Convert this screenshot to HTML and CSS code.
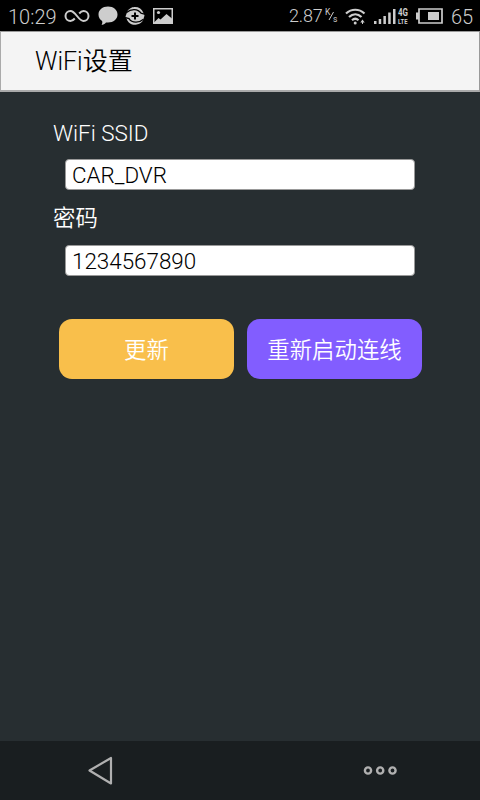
FILE: index.html
```html
<!DOCTYPE html>
<html lang="zh-CN">
<head>
<meta charset="utf-8">
<title>WiFi设置</title>
<link rel="stylesheet" href="styles.css">
</head>
<body>
<div class="status">
  <span class="time">10:29</span>
  <svg class="infinity" width="26" height="14" viewBox="0 0 26 14" fill="none" stroke="#cdcdcd" stroke-width="2"><path d="M15.200 4.500C16.500 3 17.800 2 19.500 2a5 5 0 0 1 0 10C14.500 12 11.500 2 6.500 2a5 5 0 0 0 0 10c1.700 0 3-1 4.300-2.500"/></svg>
  <svg class="chat" width="20" height="20" viewBox="0 0 20 20" fill="#cdcdcd"><path d="M10 .5c5.500 0 9.500 3.500 9.500 8s-4 8-9.500 8l-2-.1c-1 1.500-3 2.400-4.500 2.400.8-1 1.100-2.400.6-3.800C1.800 13.500.5 11.200.5 8.500c0-4.500 4-8 9.500-8Z"/></svg>
  <svg class="sync" width="20" height="20" viewBox="0 0 20 20"><path fill="#cdcdcd" d="M2.500 5C5 1.500 8 1 10 1c4 0 7 2 8.200 5.500L19.500 9.500 18 14.500C15.500 18 12 18.800 10 18.800c-4 0-7-2-8.200-5.500L.5 10.500Z"/><path fill="none" stroke="#000" stroke-width="1.300" d="M1.500 6.500C6 2.500 13 2.500 16 7.200l3.500 1M18.500 13.300C14 17.300 7 17.300 4 12.600l-3.500-1"/><path fill="none" stroke="#000" stroke-width="2" d="M6.500 9.900h7M10 6.400v7"/></svg>
  <svg class="photo" width="20" height="16" viewBox="0 0 20 16"><path fill="none" stroke="#cdcdcd" stroke-width="1.500" d="M.75.75h18.500v14.500H.75z"/><path fill="#cdcdcd" d="M1 14.500 5.500 10l2 1.500L13.500 6l6 5v4H1z"/><circle cx="5.500" cy="4.500" r="1.600" fill="#cdcdcd"/></svg>
  <span class="rate">2.87</span>
  <svg class="unit" width="13" height="14" viewBox="0 0 13 14"><text x="0" y="7">K</text><text x="8" y="13.500">s</text><path d="M4 12 8.500 4" stroke="#cdcdcd"/></svg>
  <svg class="wifi" width="21" height="17" viewBox="0 0 21 17" fill="none" stroke="#cdcdcd" stroke-width="2.200"><path d="M1 5.500c5.500-5 13-5 18.500 0M4 9c3.800-3.500 8.800-3.500 12.500 0M7 12.200c2-1.800 4.500-1.800 6.500 0"/><circle cx="10.200" cy="15" r="1.500" fill="#cdcdcd" stroke="none"/><path d="M15.300 14.500 17.500 11.500l2.200 3Z" fill="#cdcdcd" stroke="none"/><path d="M17.500 13v3" stroke-width="1"/></svg>
  <svg class="signal" width="22" height="16" viewBox="0 0 22 16" fill="#cdcdcd"><path d="M0 13h2.500v3H0zM4.700 11h2.500v5H4.700zM9.400 8h2.500v8H9.400zM14.200 4.500h2.500V16h-2.500zM19 1h2.500v15H19z"/></svg>
  <svg class="lte" width="11" height="20" viewBox="0 -2 11 20"><text class="g4" x="0" y="8.200" textLength="10" lengthAdjust="spacingAndGlyphs">4G</text><text class="small" x="0" y="16" textLength="9.500" lengthAdjust="spacingAndGlyphs">LTE</text></svg>
  <svg class="battery" width="27" height="16" viewBox="0 0 27 16"><path fill="none" stroke="#cdcdcd" stroke-width="1.700" d="M3 1h23v14H3z"/><path fill="#cdcdcd" d="M0 4.500h3v7H0zM12 4h11v8H12z"/></svg>
  <span class="level">65</span>
</div>
<header class="titlebar"><h1>WiFi设置</h1></header>
<main class="content">
  <label class="label" for="ssid">WiFi SSID</label>
  <input class="field" id="ssid" type="text" value="CAR_DVR">
  <label class="label second" for="password">密码</label>
  <input class="field" id="password" type="text" value="1234567890">
  <div class="actions">
    <button class="update" type="button">更新</button>
    <button class="restart" type="button">重新启动连线</button>
  </div>
</main>
<nav class="navbar">
  <svg width="26" height="30" viewBox="0 0 26 30" fill="none" stroke="#b0b0b0" stroke-width="2.200" stroke-linejoin="round"><path d="M2.500 14.500 24 2v25.500Z"/></svg>
  <svg width="34" height="10" viewBox="0 0 34 10" fill="none" stroke="#b0b0b0" stroke-width="2.400"><circle cx="5" cy="4.500" r="3.100"/><circle cx="17.200" cy="4.500" r="3.100"/><circle cx="29.500" cy="4.500" r="3.100"/></svg>
</nav>
</body>
</html>
```
FILE: styles.css
```css
* { box-sizing: border-box; }

body {
  margin: 0;
  height: 800px;
  display: flex;
  flex-direction: column;
  overflow: hidden;
  background: #272e31;
  font-family: Roboto, "Noto Sans CJK SC", sans-serif;
  font-weight: 350;
}

.status {
  flex: none;
  height: 31px;
  display: flex;
  align-items: center;
  padding: 1px 0 0 8px;
  background: #000;
  color: #cdcdcd;
  font-size: 20px;
  font-weight: 300;
  line-height: 30px;
  white-space: nowrap;
}
.status svg { flex: none; }
.time { width: 48px; padding-top: 1px; }
.infinity { margin-left: 8px; }
.chat { margin-left: 8px; }
.sync { margin-left: 7px; }
.photo { margin-left: 8px; }
.rate { margin-left: auto; font-size: 18px; letter-spacing: -0.2px; width: 35px; }
.unit { margin-left: 1px; margin-top: -3px; font-size: 8.5px; fill: #cdcdcd; font-weight: 400; }
.wifi { margin-left: 7px; }
.signal { margin-left: 8px; }
.lte { margin-left: 2px; fill: #cdcdcd; font-weight: 700; overflow: visible; }
.g4 { font-size: 10px; }
.small { font-size: 6.5px; }
.battery { margin-left: 7px; }
.level { width: 29px; margin-left: 8px; padding-top: 1px; }

.titlebar {
  flex: none;
  height: 61px;
  padding: 2px 0 0 34px;
  display: flex;
  align-items: center;
  background: #f4f4f4;
  border: 1px solid #999;
  border-left-color: #aaa;
  border-bottom: 2px solid #aaa;
}
.titlebar h1 {
  margin: 0;
  font-size: 25px;
  font-weight: 350;
  line-height: 36px;
  color: #000;
}

.content {
  flex: 1;
  padding: 25px 53px 0;
}
.label {
  display: block;
  height: 32px;
  line-height: 32px;
  font-size: 22.4px;
  color: #fff;
}
.label.second { margin-top: 12px; }
.field {
  display: block;
  width: 350px;
  height: 31px;
  margin: 10px 0 0 12px;
  padding: 1px 5px 0 6px;
  border: 1px solid #999;
  border-radius: 4px;
  background: #fff;
  color: #000;
  font: 350 22.4px/28px Roboto, "Noto Sans CJK SC", sans-serif;
}
.label.second + .field { margin-top: 11px; }

.actions {
  display: flex;
  gap: 13px;
  margin: 43px 0 0 6px;
}
.actions button {
  flex: none;
  width: 175px;
  height: 60px;
  padding: 2px 0 0;
  border: 0;
  border-radius: 13px;
  color: #fff;
  font: 350 22.4px/58px Roboto, "Noto Sans CJK SC", sans-serif;
}
.update { background: #f9bf4b; }
.restart { background: #825dff; }

.navbar {
  flex: none;
  height: 59px;
  display: flex;
  align-items: center;
  justify-content: space-between;
  padding: 0 83px 0 87px;
  background: #191e20;
}
```
